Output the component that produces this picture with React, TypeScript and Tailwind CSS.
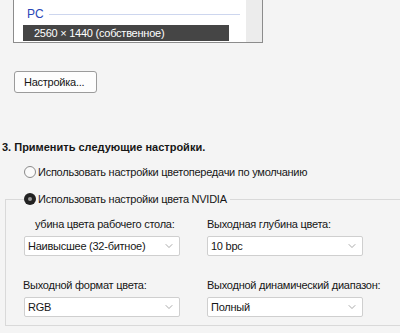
import { ChevronDown } from "lucide-react";

const Select = ({ value }: { value: string }) => {
    return (
        <div className="mt-[4px] flex items-center justify-between h-[20px] w-[156px] bg-white border border-[#cfcfcf] rounded-[2px] pl-[3px] pr-[4px]">
            <span className="leading-none">{value}</span>
            <ChevronDown size={12} strokeWidth={1.2} className="text-[#707070]" />
        </div>
    );
};

const App = () => {
    return (
        <div className="w-[400px] h-[333px] overflow-hidden whitespace-nowrap bg-[#f4f4f4] text-[11px] tracking-[-0.25px] text-[#161616] font-['Liberation_Sans',sans-serif]">
            {/* список разрешений */}
            <div className="ml-[13px] w-[250px] h-[43px] flex bg-white border-l border-r border-b border-[#8c8c8c]">
                <div className="flex-1 pt-[6px]">
                    <div className="flex items-center h-[16px] pl-[13px]">
                        <span className="text-[#2a47b8] text-[12px] leading-none tracking-normal">PC</span>
                        <div className="ml-[5px] w-[191px] h-px bg-[#cdd6ee]" />
                    </div>
                    <div className="mt-[3px] ml-[9px] w-[206px] h-[16px] bg-[#454545] text-white pl-[11px] flex items-center">
                        2560 × 1440 (собственное)
                    </div>
                </div>
                <div className="w-[16px] bg-[#ececec]" />
            </div>

            <button className="mt-[28px] ml-[14px] w-[83px] h-[22px] text-left pl-[9px] bg-[#fdfdfd] border border-[#9b9b9b] rounded-[3px]">
                Настройка...
            </button>

            <div className="mt-[46px] ml-[2px] h-[16px] flex items-center font-bold tracking-normal">
                3. Применить следующие настройки.
            </div>

            <div className="mt-[9px] ml-[24px] h-[16px] flex items-center gap-[2px]">
                <span className="w-[12px] h-[12px] rounded-full border border-[#8a8a8a] bg-[#fafafa]" />
                <span>Использовать настройки цветопередачи по умолчанию</span>
            </div>

            <fieldset className="mt-[11px] ml-[5px] border-t border-l border-b border-[#d9d9d9] pb-[8px]">
                <legend className="ml-[18px] pr-[3px] h-[16px] flex items-center gap-[2px]">
                    <span className="w-[12px] h-[12px] rounded-full bg-[#222] flex items-center justify-center">
                        <span className="w-[4px] h-[4px] rounded-full bg-[#9a9a9a]" />
                    </span>
                    <span>Использовать настройки цвета NVIDIA</span>
                </legend>

                <div className="pl-[18px] grid grid-cols-[156px_156px] gap-x-[27px]">
                    <div className="mt-[9px]">
                        <div className="h-[16px] flex items-center pl-[11px]">убина цвета рабочего стола:</div>
                        <Select value="Наивысшее (32-битное)" />
                    </div>
                    <div className="mt-[9px]">
                        <div className="h-[16px] flex items-center">Выходная глубина цвета:</div>
                        <Select value="10 bpc" />
                    </div>
                    <div className="mt-[21px]">
                        <div className="h-[16px] flex items-center -ml-[1px]">Выходной формат цвета:</div>
                        <Select value="RGB" />
                    </div>
                    <div className="mt-[21px]">
                        <div className="h-[16px] flex items-center">Выходной динамический диапазон:</div>
                        <Select value="Полный" />
                    </div>
                </div>
            </fieldset>
        </div>
    );
};

export default App;
